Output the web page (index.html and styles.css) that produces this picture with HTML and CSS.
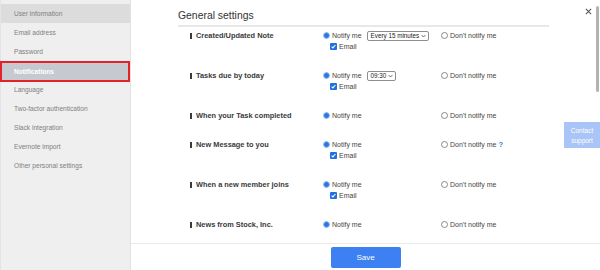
FILE: index.html
```html
<!DOCTYPE html>
<html>
<head>
<meta charset="utf-8">
<link rel="stylesheet" href="styles.css">
</head>
<body>
<div class="app">
  <nav class="sidebar">
    <div class="nav-item hover">User information</div>
    <div class="nav-item">Email address</div>
    <div class="nav-item">Password</div>
    <div class="nav-item active">Notifications</div>
    <div class="nav-item">Language</div>
    <div class="nav-item">Two-factor authentication</div>
    <div class="nav-item">Slack integration</div>
    <div class="nav-item">Evernote import</div>
    <div class="nav-item">Other personal settings</div>
  </nav>
  <main class="main">
    <div class="scroll">
      <h1 class="title">General settings</h1>
      <div class="rows">
        <div class="row">
          <div class="label">Created/Updated Note</div>
          <div class="opts">
            <div class="line"><span class="radio on"></span>Notify me<span class="select">Every 15 minutes<svg class="chev" viewBox="0 0 8 5"><path d="M1 1l3 3 3-3" fill="none" stroke="#333" stroke-width="1.2"/></svg></span></div>
            <div class="line email"><span class="check"><svg viewBox="0 0 7 7"><path d="M1.6 3.7l1.3 1.2 2.5-2.9" fill="none" stroke="#fff" stroke-width="1.1"/></svg></span>Email</div>
          </div>
          <div class="off"><div class="line"><span class="radio"></span>Don't notify me</div></div>
        </div>
        <div class="row">
          <div class="label">Tasks due by today</div>
          <div class="opts">
            <div class="line"><span class="radio on"></span>Notify me<span class="select">09:30<svg class="chev" viewBox="0 0 8 5"><path d="M1 1l3 3 3-3" fill="none" stroke="#333" stroke-width="1.2"/></svg></span></div>
            <div class="line email"><span class="check"><svg viewBox="0 0 7 7"><path d="M1.6 3.7l1.3 1.2 2.5-2.9" fill="none" stroke="#fff" stroke-width="1.1"/></svg></span>Email</div>
          </div>
          <div class="off"><div class="line"><span class="radio"></span>Don't notify me</div></div>
        </div>
        <div class="row">
          <div class="label">When your Task completed</div>
          <div class="opts">
            <div class="line"><span class="radio on"></span>Notify me</div>
          </div>
          <div class="off"><div class="line"><span class="radio"></span>Don't notify me</div></div>
        </div>
        <div class="row">
          <div class="label">New Message to you</div>
          <div class="opts">
            <div class="line"><span class="radio on"></span>Notify me</div>
            <div class="line email"><span class="check"><svg viewBox="0 0 7 7"><path d="M1.6 3.7l1.3 1.2 2.5-2.9" fill="none" stroke="#fff" stroke-width="1.1"/></svg></span>Email</div>
          </div>
          <div class="off"><div class="line"><span class="radio"></span>Don't notify me<span class="help">?</span></div></div>
        </div>
        <div class="row">
          <div class="label">When a new member joins</div>
          <div class="opts">
            <div class="line"><span class="radio on"></span>Notify me</div>
            <div class="line email"><span class="check"><svg viewBox="0 0 7 7"><path d="M1.6 3.7l1.3 1.2 2.5-2.9" fill="none" stroke="#fff" stroke-width="1.1"/></svg></span>Email</div>
          </div>
          <div class="off"><div class="line"><span class="radio"></span>Don't notify me</div></div>
        </div>
        <div class="row">
          <div class="label">News from Stock, Inc.</div>
          <div class="opts">
            <div class="line"><span class="radio on"></span>Notify me</div>
          </div>
          <div class="off"><div class="line"><span class="radio"></span>Don't notify me</div></div>
        </div>
      </div>
    </div>
    <footer class="footer">
      <button class="save">Save</button>
    </footer>
    <div class="close"><svg viewBox="0 0 8 8"><path d="M1 1l6 6M7 1l-6 6" stroke="#555" stroke-width="1.2"/></svg></div>
    <div class="scrollbar"></div>
    <div class="contact">Contact<br>support</div>
  </main>
</div>
</body>
</html>
```
FILE: styles.css
```css
* { box-sizing: border-box; }
html, body { margin: 0; padding: 0; }
body {
  width: 600px;
  height: 270px;
  overflow: hidden;
  background: #fff;
  font-family: "Liberation Sans", Arial, sans-serif;
}
.app {
  display: flex;
  height: 270px;
}
.sidebar {
  width: 131px;
  flex: none;
  background: #efefef;
  border-left: 1px solid #e4e4e4;
  border-right: 1px solid #e2e2e2;
  padding-top: 4px;
}
.nav-item {
  height: 19px;
  line-height: 19px;
  padding-left: 13px;
  font-size: 6.6px;
  color: #808080;
}
.nav-item.hover { background: #dcdcdc; }
.nav-item.active {
  height: 21px;
  margin-left: -1px;
  margin-bottom: -2px;
  border: 2px solid #e3212b;
  background: #c7c9d1;
  color: #fff;
  font-weight: bold;
  line-height: 17px;
  padding-left: 12px;
}
.main {
  flex: 1;
  position: relative;
  display: flex;
  flex-direction: column;
}
.scroll {
  flex: 1;
  overflow: hidden;
}
.title {
  margin: 0 51px 0 47px;
  padding: 10px 0 3px;
  font-size: 10.4px;
  line-height: 12px;
  font-weight: normal;
  color: #333;
  border-bottom: 2px solid #e8e8e8;
}
.rows {
  padding: 3px 0 0 59px;
}
.row {
  display: grid;
  grid-template-columns: 133px 118px auto;
  padding-bottom: 18px;
}
.label {
  font-size: 7.4px;
  line-height: 11px;
  font-weight: bold;
  color: #3a3a3a;
  display: flex;
  align-items: center;
  height: 11px;
}
.label::before {
  content: "";
  width: 2px;
  height: 6px;
  background: #3a3a3a;
  margin-right: 4px;
}
.line {
  display: flex;
  align-items: center;
  height: 11px;
  font-size: 7px;
  color: #444;
}
.email { padding-left: 7px; }
.radio {
  width: 7px;
  height: 7px;
  border-radius: 50%;
  border: 1px solid #8a8a8a;
  background: #fff;
  margin-right: 2px;
  flex: none;
}
.radio.on {
  background: #2a78e4;
  border-color: #a3c4f0;
}
.check {
  width: 7px;
  height: 7px;
  border-radius: 1px;
  background: #1f6fe3;
  margin-right: 2px;
  display: flex;
}
.check svg { width: 7px; height: 7px; }
.select {
  margin-left: 5px;
  height: 10px;
  border: 1px solid #8e8e8e;
  border-radius: 2px;
  padding: 0 2px 0 3px;
  display: flex;
  align-items: center;
  font-size: 6.3px;
  color: #222;
}
.chev { width: 5px; height: 4px; margin-left: 2px; }
.help {
  color: #2d7fd3;
  font-weight: bold;
  font-size: 7.5px;
  margin-left: 2px;
}
.footer {
  height: 27px;
  flex: none;
  border-top: 1px solid #eaeaea;
  display: flex;
  justify-content: center;
  padding-top: 3px;
}
.save {
  width: 70px;
  height: 21px;
  border: none;
  border-radius: 2px;
  background: #3c80f2;
  color: #fff;
  font-family: "Liberation Sans", Arial, sans-serif;
  font-size: 8px;
  padding: 0;
}
.close {
  position: absolute;
  left: 454px;
  top: 8px;
  width: 7px;
  height: 7px;
  display: flex;
}
.close svg { width: 7px; height: 7px; }
.scrollbar {
  position: absolute;
  left: 465px;
  top: 6px;
  width: 3px;
  height: 86px;
  border-radius: 2px;
  background: #b3b3b3;
}
.contact {
  position: absolute;
  left: 433px;
  top: 122px;
  width: 36px;
  height: 26px;
  background: #a9c5f7;
  color: #fff;
  font-size: 6.5px;
  line-height: 9.5px;
  text-align: center;
  padding-top: 4px;
}
```
